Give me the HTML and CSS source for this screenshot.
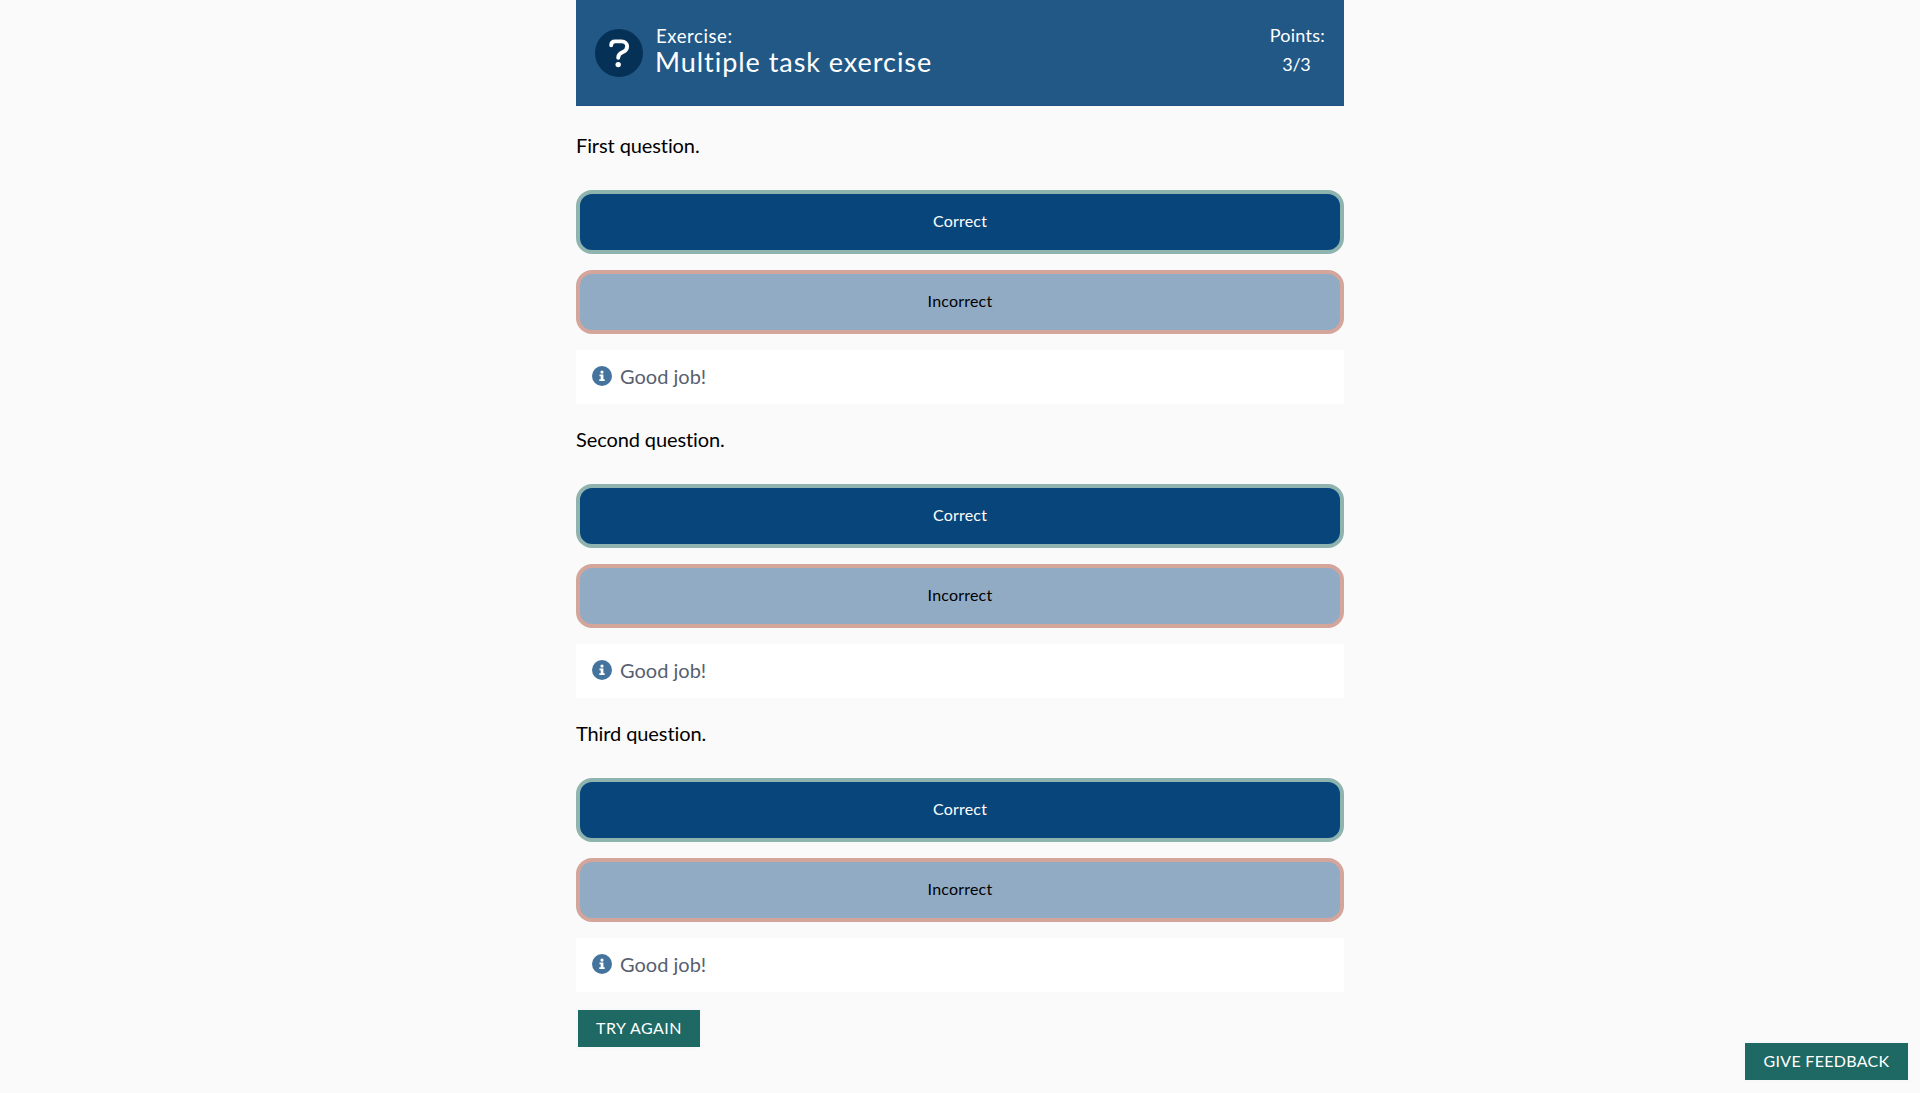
FILE: index.html
```html
<!DOCTYPE html>
<html lang="en">
<head>
<meta charset="utf-8">
<title>Multiple task exercise</title>
<link rel="stylesheet" href="styles.css">
</head>
<body>
<svg width="0" height="0" class="sprite" aria-hidden="true">
  <symbol id="info" viewBox="0 0 20 20">
    <circle cx="10" cy="10" r="10" fill="#44749d"/>
    <circle cx="10" cy="6.1" r="1.6" fill="#fff"/>
    <path d="M7.5 8.6h3.9v4.7h1.3v1.6H7.3v-1.6h1.4v-3.1H7.5z" fill="#fff"/>
  </symbol>
</svg>
<main class="exercise">
  <header class="header">
    <svg class="header-icon" viewBox="0 0 48 48">
      <circle cx="24" cy="24" r="24" fill="#063157"/>
      <path d="M16.2 16.3c0-2.6 1.6-3.9 4-3.9h6.2c3.6 0 5.7 2.1 5.7 5.1 0 3.2-1.8 4.5-4.2 5.6-2.5 1.1-4.7 1.8-4.7 5.6" fill="none" stroke="#fff" stroke-width="3.9" stroke-linecap="round"/>
      <circle cx="23.2" cy="35.6" r="2.7" fill="#fff"/>
    </svg>
    <h1 class="heading"><span class="kind">Exercise:</span><span class="title">Multiple task exercise</span></h1>
    <div class="points"><span class="points-label">Points:</span><span class="points-value">3/3</span></div>
  </header>
  <section class="task">
    <p class="question">First question.</p>
    <button class="option correct">Correct</button>
    <button class="option incorrect">Incorrect</button>
    <div class="feedback"><svg class="info"><use href="#info"/></svg><span>Good job!</span></div>
  </section>
  <section class="task">
    <p class="question">Second question.</p>
    <button class="option correct">Correct</button>
    <button class="option incorrect">Incorrect</button>
    <div class="feedback"><svg class="info"><use href="#info"/></svg><span>Good job!</span></div>
  </section>
  <section class="task">
    <p class="question">Third question.</p>
    <button class="option correct">Correct</button>
    <button class="option incorrect">Incorrect</button>
    <div class="feedback"><svg class="info"><use href="#info"/></svg><span>Good job!</span></div>
  </section>
  <button class="action try-again">Try again</button>
</main>
<button class="action give-feedback">Give feedback</button>
</body>
</html>
```
FILE: styles.css
```css
* { box-sizing: border-box; }
body {
  margin: 0;
  height: 1093px;
  overflow: hidden;
  background: #fafafa;
  color: #000;
  font-family: Lato, sans-serif;
  font-variant-ligatures: none;
}
button { font-family: inherit; font-variant-ligatures: none; }
.sprite { position: absolute; }
.exercise { width: 768px; margin: 0 auto; }
.header {
  display: flex;
  height: 106px;
  padding: 0 19px;
  align-items: center;
  background: #225886;
  border-bottom: 1px solid #1d5385;
  color: #fff;
}
.header-icon { width: 48px; height: 48px; flex: none; }
.heading { margin: -4px 0 0 12px; font-weight: 400; }
.kind, .title { display: block; white-space: nowrap; }
.kind { padding-left: 1px; font-size: 18.5px; line-height: 23px; letter-spacing: 0.6px; }
.title { font-size: 27px; line-height: 28px; letter-spacing: 0.95px; }
.points {
  display: flex;
  flex-direction: column;
  align-items: center;
  margin: -5px 0 0 auto;
  font-size: 18px;
  line-height: 29px;
  letter-spacing: 0.25px;
}
.points-value { margin-right: 2px; letter-spacing: -0.3px; }
.task { height: 294px; padding-top: 23px; }
.question { margin: 0 0 29px; font-size: 20px; line-height: 32px; letter-spacing: -0.1px; }
.option {
  display: block;
  width: 100%;
  height: 64px;
  margin: 0 0 16px;
  padding: 0 0 3px;
  border-radius: 16px;
  font-size: 16px;
  letter-spacing: 0.2px;
}
.correct { background: #08457a; border: 4px solid #8fb4af; color: #fff; }
.incorrect { background: #92abc4; border: 4px solid #d4a59a; color: #000; }
.feedback {
  display: flex;
  height: 54px;
  padding: 0 16px 2px;
  align-items: center;
  gap: 8px;
  background: #fff;
  color: #57606f;
  font-size: 20px;
}
.info { width: 20px; height: 20px; }
.action {
  display: block;
  height: 41px;
  padding: 0 0 2px;
  border: 2px solid #f7f8f9;
  background: #1f6964;
  color: #fff;
  font-size: 16px;
  letter-spacing: 0.5px;
  text-transform: uppercase;
}
.try-again { width: 126px; margin-top: 20px; }
.give-feedback { position: fixed; right: 10px; bottom: 11px; width: 167px; letter-spacing: 0.3px; }
```
